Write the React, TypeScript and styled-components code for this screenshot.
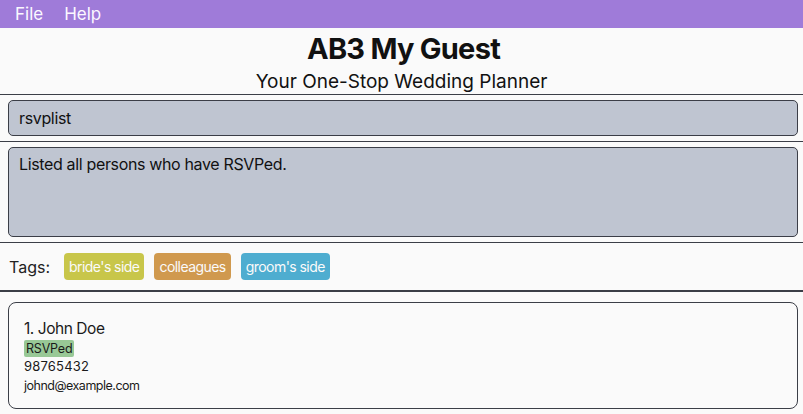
import React from "react";
import styled, { createGlobalStyle } from "styled-components";

const Global = createGlobalStyle`
  html, body { margin: 0; padding: 0; background: #fafafa; }
  body { font-family: Inter, "Noto Sans", "Liberation Sans", sans-serif; color: #1a1a1a; }
  * { box-sizing: border-box; }
`;

const Page = styled.div`
  width: 803px;
  height: 414px;
  display: flex;
  flex-direction: column;
  background: #fafafa;
  overflow: hidden;
`;

const MenuBar = styled.div`
  height: 28px;
  background: #9f7bd9;
  display: flex;
  align-items: center;
  padding-left: 15px;
  gap: 21px;
`;

const MenuItem = styled.span`
  color: #fbf8ff;
  font-size: 17px;
  line-height: 28px;
`;

const Header = styled.header`
  height: 67px;
  display: flex;
  flex-direction: column;
  align-items: center;
  border-bottom: 1px solid #3b3e47;
  padding-top: 3px;
`;

const Title = styled.h1`
  margin: 0;
  font-size: 29px;
  font-weight: 700;
  letter-spacing: -0.75px;
  line-height: 36px;
  color: #111;
  transform: translateX(2px);
`;

const Subtitle = styled.div`
  font-size: 19px;
  line-height: 24px;
  margin-top: 3px;
  color: #111;
`;

const Section = styled.section<{ $pad: string; $border?: string }>`
  padding: ${(p) => p.$pad};
  border-bottom: ${(p) => p.$border ?? "1px solid #3b3e47"};
`;

const Box = styled.div<{ $h: number }>`
  height: ${(p) => p.$h}px;
  background: #bfc5d1;
  border: 1px solid #3b3e47;
  border-radius: 5px;
  padding: 0 10px;
  font-size: 16px;
  letter-spacing: -0.35px;
  color: #111;
`;

const CommandBox = styled(Box)`
  display: flex;
  align-items: center;
`;

const ResultBox = styled(Box)`
  padding-top: 6px;
  line-height: 20px;
`;

const TagsRow = styled.div`
  height: 47px;
  display: flex;
  align-items: center;
  padding-left: 9px;
  gap: 10px;
`;

const TagsLabel = styled.span`
  font-size: 16px;
  color: #222;
  margin-right: 4px;
`;

const Tag = styled.span<{ $bg: string }>`
  background: ${(p) => p.$bg};
  color: #fafafa;
  font-size: 14px;
  letter-spacing: -0.55px;
  height: 27px;
  padding: 0 5px;
  border-radius: 4px;
  display: inline-flex;
  align-items: center;
`;

const ListArea = styled.div`
  flex: 1;
  padding: 10px 5px 4px 8px;
`;

const Card = styled.div`
  height: 107px;
  border: 1px solid #3b3e47;
  border-radius: 8px;
  padding: 16px 15px 0;
  display: flex;
  flex-direction: column;
  align-items: flex-start;
`;

const Name = styled.div`
  font-size: 15.5px;
  letter-spacing: -0.45px;
  line-height: 20px;
  color: #1a1a1a;
`;

const Badge = styled.div`
  background: #98c896;
  font-size: 12.5px;
  letter-spacing: -0.2px;
  height: 17px;
  line-height: 17px;
  padding: 0 2px;
  border-radius: 2px;
  margin-top: 1px;
  color: #1a1a1a;
`;

const Detail = styled.div<{ $size: number; $ls: string }>`
  font-size: ${(p) => p.$size}px;
  letter-spacing: ${(p) => p.$ls};
  line-height: 19px;
  color: #1a1a1a;
`;

export default function App() {
  return (
    <Page>
      <Global />
      <MenuBar>
        <MenuItem>File</MenuItem>
        <MenuItem>Help</MenuItem>
      </MenuBar>
      <Header>
        <Title>AB3 My Guest</Title>
        <Subtitle>Your One-Stop Wedding Planner</Subtitle>
      </Header>
      <Section $pad="5px 5px 5px 8px">
        <CommandBox $h={36}>rsvplist</CommandBox>
      </Section>
      <Section $pad="5px 5px 5px 8px">
        <ResultBox $h={90}>Listed all persons who have RSVPed.</ResultBox>
      </Section>
      <Section $pad="0" $border="2px solid #3b3e47">
        <TagsRow>
          <TagsLabel>Tags:</TagsLabel>
          <Tag $bg="#c8c64a">bride's side</Tag>
          <Tag $bg="#d0994e">colleagues</Tag>
          <Tag $bg="#4eadd0">groom's side</Tag>
        </TagsRow>
      </Section>
      <ListArea>
        <Card>
          <Name>1. John Doe</Name>
          <Badge>RSVPed</Badge>
          <Detail $size={13} $ls="0.2px">98765432</Detail>
          <Detail $size={12.5} $ls="-0.5px">johnd@example.com</Detail>
        </Card>
      </ListArea>
    </Page>
  );
}
